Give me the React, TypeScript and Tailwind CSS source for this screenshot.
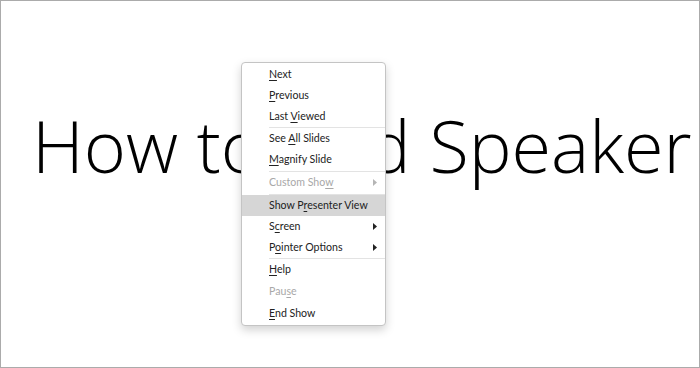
import type { ReactNode } from "react";

type Item = {
  label: ReactNode;
  disabled?: boolean;
  active?: boolean;
  submenu?: boolean;
  tall?: boolean;
};

type Entry = Item | "sep" | "sep2";

function U({ children }: { children: ReactNode }) {
  return <span className="underline underline-offset-2 decoration-1">{children}</span>;
}

const entries: Entry[] = [
  { label: <><U>N</U>ext</> },
  { label: <><U>P</U>revious</> },
  { label: <>Last <U>V</U>iewed</> },
  "sep",
  { label: <>See <U>A</U>ll Slides</> },
  { label: <><U>M</U>agnify Slide</> },
  "sep2",
  { label: <>Custom Sho<U>w</U></>, disabled: true, submenu: true },
  "sep2",
  { label: <>Show P<U>r</U>esenter View</>, active: true },
  { label: <>S<U>c</U>reen</>, submenu: true },
  { label: <>P<U>o</U>inter Options</>, submenu: true },
  "sep",
  { label: <><U>H</U>elp</>, tall: true },
  { label: <>Pau<U>s</U>e</>, disabled: true, tall: true },
  { label: <><U>E</U>nd Show</>, tall: true },
];

function Arrow({ disabled }: { disabled?: boolean }) {
  return (
    <svg width="4" height="7" viewBox="0 0 4 7" className="mr-[8px]">
      <path d="M0 0 L4 3.5 L0 7 Z" fill={disabled ? "#b5b5b5" : "#222"} />
    </svg>
  );
}

function ContextMenu() {
  return (
    <div
      className="absolute left-[240px] top-[61px] w-[145px] rounded-[4px] border border-[#c4c4c4] bg-white pt-px shadow-[0_4px_10px_rgba(0,0,0,0.18)]"
      style={{ fontFamily: 'Lato, "Open Sans", sans-serif' }}
    >
      {entries.map((e, i) => {
        if (e === "sep" || e === "sep2") {
          return (
            <div key={i} className={e === "sep2" ? "py-[0.5px] pl-[27px]" : "pl-[27px]"}>
              <div className="h-px bg-[#e3e3e3]" />
            </div>
          );
        }
        return (
          <div
            key={i}
            className={`flex items-center justify-between pl-[27px] text-[10.6px] ${
              e.tall ? "h-[22px]" : "h-[21px]"
            } ${e.active ? "bg-[#d6d6d6]" : ""} ${e.disabled ? "text-[#a8a8a8]" : "text-[#222]"}`}
          >
            <span>{e.label}</span>
            {e.submenu && <Arrow disabled={e.disabled} />}
          </div>
        );
      })}
    </div>
  );
}

export default function App() {
  return (
    <div
      className="relative h-[368px] w-[700px] overflow-hidden border border-[#ababab] bg-white"
      style={{ fontFamily: '"Open Sans", "Noto Sans", sans-serif' }}
    >
      <div className="whitespace-nowrap pl-[31px] pt-[108px] text-[72px] font-light leading-none text-black">
        How to Add Speaker Notes
      </div>
      <ContextMenu />
    </div>
  );
}
